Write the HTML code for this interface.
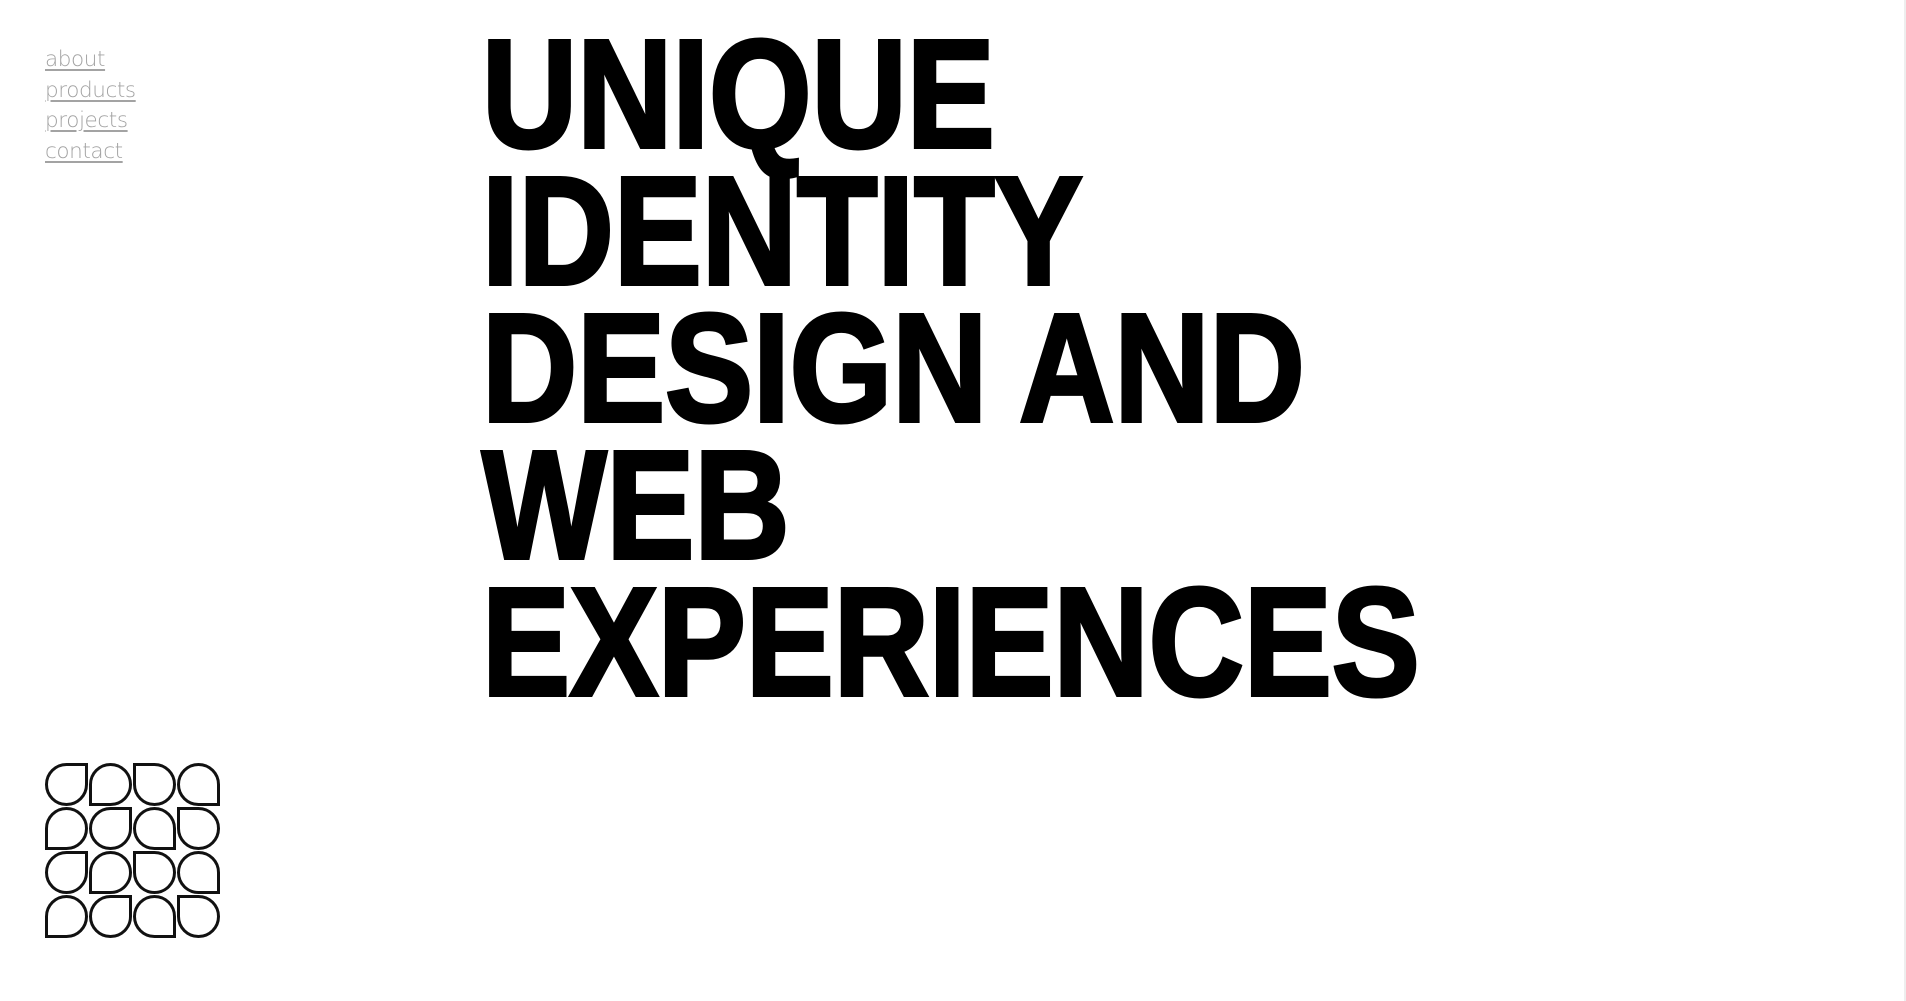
<!DOCTYPE html>
<html><head><meta charset="utf-8"><style>
html,body{margin:0;padding:0;background:#fff;width:1906px;height:1001px;overflow:hidden;position:relative}
.nav{position:absolute;left:45px;top:45px;font-family:"DejaVu Sans","Liberation Sans",sans-serif;font-size:21.5px;line-height:30.5px;font-weight:300}
.nav a{display:block;color:#a3a3a3;text-decoration:underline;text-decoration-thickness:2px;text-underline-offset:3px;letter-spacing:-0.4px}
h1{position:absolute;left:482px;top:26px;margin:0;font-family:"Liberation Sans",sans-serif;font-weight:bold;font-size:154px;line-height:137px;letter-spacing:0px;color:#000;white-space:nowrap;-webkit-text-stroke:4px #000;transform:scaleX(0.856);transform-origin:0 0}
.logo{position:absolute;left:45px;top:763px;width:176px;height:176px}
.logo div{position:absolute;width:43px;height:43px;box-sizing:border-box;border:3.5px solid #111;border-radius:50%}
.tr{border-top-right-radius:0!important}.tl{border-top-left-radius:0!important}
.br{border-bottom-right-radius:0!important}.bl{border-bottom-left-radius:0!important}
.edge{position:absolute;right:0;top:0;width:2px;height:1001px;background:#eee}
</style></head><body>
<div class="nav"><a>about</a><a>products</a><a>projects</a><a>contact</a></div>
<h1>UNIQUE<br>IDENTITY<br>DESIGN AND<br>WEB<br>EXPERIENCES</h1>
<div class="logo">
<div class="tr" style="left:0;top:0"></div><div class="bl" style="left:44px;top:0"></div><div class="tl" style="left:88px;top:0"></div><div class="br" style="left:132px;top:0"></div>
<div class="bl" style="left:0;top:44px"></div><div class="tr" style="left:44px;top:44px"></div><div class="br" style="left:88px;top:44px"></div><div class="tl" style="left:132px;top:44px"></div>
<div class="tr" style="left:0;top:88px"></div><div class="bl" style="left:44px;top:88px"></div><div class="tl" style="left:88px;top:88px"></div><div class="br" style="left:132px;top:88px"></div>
<div class="bl" style="left:0;top:132px"></div><div class="tr" style="left:44px;top:132px"></div><div class="br" style="left:88px;top:132px"></div><div class="tl" style="left:132px;top:132px"></div>
</div>
<div class="edge"></div>
</body></html>
